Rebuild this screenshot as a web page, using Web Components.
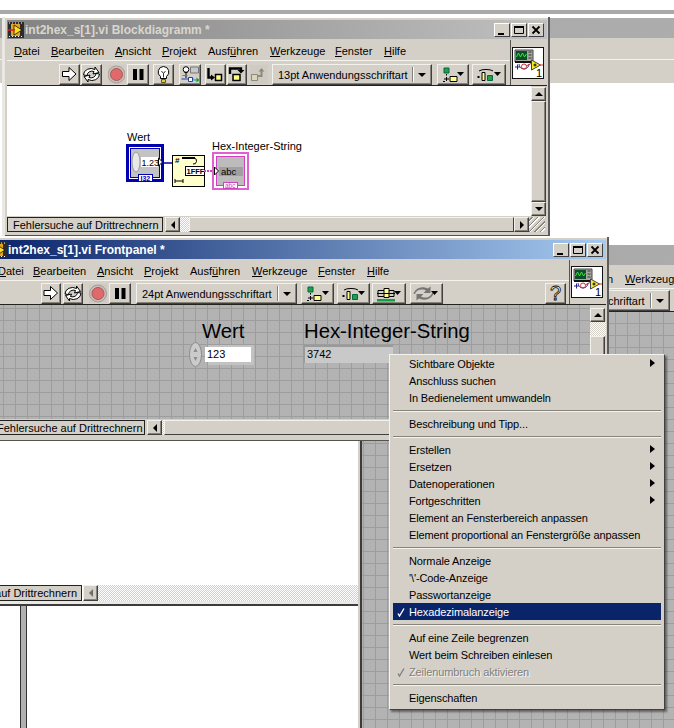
<!DOCTYPE html>
<html lang="de"><head><meta charset="utf-8"><title>int2hex</title>
<style>
html,body{margin:0;padding:0;background:#fff}
body{font:11px "Liberation Sans",sans-serif;color:#000}
</style></head><body>
<lv-desktop>
  <lv-window class="w" caption="" chrome="none" style="left:-40px;top:10px;width:760px;height:236px;--band:4px;--hh:4px;--tt:20px;--tm:0px">
    <lv-menubar slot="menu"></lv-menubar>
    <lv-toolbar slot="toolbar"></lv-toolbar>
    <lv-blank></lv-blank>
  </lv-window>

  <lv-window caption="int2hex_s[1].vi Blockdiagramm *" style="left:5px;top:17px;width:545px;height:219px;box-shadow:-3px 0 0 #e9e8e2;--tbh:24px;--pt:3px">
    <lv-menubar slot="menu">
      <lv-mi style="width:37px;margin-left:7px"><u>D</u>atei</lv-mi><lv-mi style="width:64px"><u>B</u>earbeiten</lv-mi><lv-mi style="width:47px"><u>A</u>nsicht</lv-mi><lv-mi style="width:46px"><u>P</u>rojekt</lv-mi><lv-mi style="width:62px">Ausf<u>ü</u>hren</lv-mi><lv-mi style="width:65px"><u>W</u>erkzeuge</lv-mi><lv-mi style="width:49px"><u>F</u>enster</lv-mi><lv-mi style="width:40px"><u>H</u>ilfe</lv-mi>
    </lv-menubar>
    <lv-toolbar slot="toolbar" style="padding-left:52px">
      <lv-tool icon="run" style="width:21px"></lv-tool>
      <lv-tool icon="loop" style="width:21px;margin-left:1px"></lv-tool>
      <lv-tool icon="rec" flat style="width:19px;margin-left:5px"></lv-tool>
      <lv-tool icon="pause" style="width:22px;margin-left:1px"></lv-tool>
      <lv-tool icon="bulb" style="width:21px;margin-left:4px"></lv-tool>
      <lv-tool icon="probe" style="width:22px;margin-left:5px"></lv-tool>
      <lv-tool icon="into" style="width:21px;margin-left:4px"></lv-tool>
      <lv-tool icon="over" style="width:20px;margin-left:1px"></lv-tool>
      <lv-tool icon="out" flat style="width:20px;margin-left:2px"></lv-tool>
      <lv-fontbox style="width:160px;margin-left:3px">13pt Anwendungsschriftart</lv-fontbox>
      <lv-tool icon="align" style="width:32px;margin-left:5px"></lv-tool>
      <lv-tool icon="dist" style="width:34px;margin-left:3px"></lv-tool>
    </lv-toolbar>
    <lv-viicon slot="icon"></lv-viicon>
    <lv-pane>
      <lv-canvas>
        <lv-diagram style="left:119px;top:53px"></lv-diagram>
      </lv-canvas>
      <lv-vscroll slot="v" style="width:16px"></lv-vscroll>
    </lv-pane>
    <lv-statusbar style="--tab:156px;--tabpad:5px;--thumbl:9px;--thumbw:325px;margin-bottom:2px" right grip>Fehlersuche auf Drittrechnern</lv-statusbar>
  </lv-window>

  <lv-window caption="" chrome="none" style="left:358px;top:244px;width:400px;height:500px;--hh:1px;--tt:20px;--tm:2px;--tbh:22px;--pt:1px">
    <lv-menubar slot="menu">
      <lv-mi style="width:37px;margin-left:9px"><u>D</u>atei</lv-mi><lv-mi style="width:64px"><u>B</u>earbeiten</lv-mi><lv-mi style="width:47px"><u>A</u>nsicht</lv-mi><lv-mi style="width:46px"><u>P</u>rojekt</lv-mi><lv-mi style="width:62px">Ausf<u>ü</u>hren</lv-mi><lv-mi style="width:65px"><u>W</u>erkzeuge</lv-mi>
    </lv-menubar>
    <lv-toolbar slot="toolbar" style="padding-left:149px">
      <lv-fontbox style="width:161px">24pt Anwendungsschriftart</lv-fontbox>
    </lv-toolbar>
    <lv-grid style="--gx:1px;--gy:11px;border-left:2px solid #3c3c3c"></lv-grid>
  </lv-window>

  <lv-lower style="left:-8px;top:441px;width:366px;height:287px"></lv-lower>

  <lv-window active caption="int2hex_s[1].vi Frontpanel *" style="left:-9px;top:237px;width:618px;height:204px;--tbh:23px;--il:-3px">
    <lv-menubar slot="menu">
      <lv-mi style="width:35px;margin-left:5px"><u>D</u>atei</lv-mi><lv-mi style="width:64px"><u>B</u>earbeiten</lv-mi><lv-mi style="width:47px"><u>A</u>nsicht</lv-mi><lv-mi style="width:46px"><u>P</u>rojekt</lv-mi><lv-mi style="width:62px">Ausf<u>ü</u>hren</lv-mi><lv-mi style="width:66px"><u>W</u>erkzeuge</lv-mi><lv-mi style="width:49px"><u>F</u>enster</lv-mi><lv-mi style="width:40px"><u>H</u>ilfe</lv-mi>
    </lv-menubar>
    <lv-toolbar slot="toolbar" style="padding-left:48px">
      <lv-tool icon="run" style="width:20px"></lv-tool>
      <lv-tool icon="loop" style="width:20px;margin-left:2px"></lv-tool>
      <lv-tool icon="rec" flat style="width:20px;margin-left:5px"></lv-tool>
      <lv-tool icon="pause" style="width:22px;margin-left:1px"></lv-tool>
      <lv-fontbox style="width:161px;margin-left:5px">24pt Anwendungsschriftart</lv-fontbox>
      <lv-tool icon="align" style="width:33px;margin-left:4px"></lv-tool>
      <lv-tool icon="dist" style="width:33px;margin-left:3px"></lv-tool>
      <lv-tool icon="resize" style="width:34px;margin-left:2px"></lv-tool>
      <lv-tool icon="reorder" style="width:33px;margin-left:4px"></lv-tool>
      <lv-tool icon="help" style="width:21px;margin-left:102px"></lv-tool>
    </lv-toolbar>
    <lv-viicon slot="icon"></lv-viicon>
    <lv-pane>
      <lv-grid style="--gx:10px;--gy:3px">
        <lv-numeric style="left:196px;top:16px"></lv-numeric>
        <lv-strind style="left:310px;top:14px"></lv-strind>
      </lv-grid>
      <lv-vscroll slot="v" style="width:16px;--cap:3px;--chk:14px"></lv-vscroll>
    </lv-pane>
    <lv-statusbar style="--tab:152px;--tabpad:3px;--thumbl:2px;--thumbw:420px;margin-bottom:4px">Fehlersuche auf Drittrechnern</lv-statusbar>
  </lv-window>

  <lv-contextmenu style="left:389px;top:354px">
    <lv-cmi arrow>Sichtbare Objekte</lv-cmi>
    <lv-cmi>Anschluss suchen</lv-cmi>
    <lv-cmi>In Bedienelement umwandeln</lv-cmi>
    <lv-cmsep></lv-cmsep>
    <lv-cmi>Beschreibung und Tipp...</lv-cmi>
    <lv-cmsep></lv-cmsep>
    <lv-cmi arrow>Erstellen</lv-cmi>
    <lv-cmi arrow>Ersetzen</lv-cmi>
    <lv-cmi arrow>Datenoperationen</lv-cmi>
    <lv-cmi arrow>Fortgeschritten</lv-cmi>
    <lv-cmi>Element an Fensterbereich anpassen</lv-cmi>
    <lv-cmi>Element proportional an Fenstergröße anpassen</lv-cmi>
    <lv-cmsep></lv-cmsep>
    <lv-cmi>Normale Anzeige</lv-cmi>
    <lv-cmi>'\'-Code-Anzeige</lv-cmi>
    <lv-cmi>Passwortanzeige</lv-cmi>
    <lv-cmi checked selected>Hexadezimalanzeige</lv-cmi>
    <lv-cmsep></lv-cmsep>
    <lv-cmi>Auf eine Zeile begrenzen</lv-cmi>
    <lv-cmi>Wert beim Schreiben einlesen</lv-cmi>
    <lv-cmi checked disabled>Zeilenumbruch aktivieren</lv-cmi>
    <lv-cmsep></lv-cmsep>
    <lv-cmi>Eigenschaften</lv-cmi>
  </lv-contextmenu>
</lv-desktop>

<script>
const FONT='"Liberation Sans",sans-serif';
const CHK='repeating-conic-gradient(#fff 0 25%,#d4d0c8 0 50%) 0 0/2px 2px';
function def(name,css,html){
  customElements.define(name,class extends HTMLElement{
    connectedCallback(){
      if(this.shadowRoot)return;
      this.attachShadow({mode:'open'}).innerHTML='<style>'+css+'</style>'+(typeof html==='function'?html(this):html);
    }
  });
}
const ICONS={
 run:'<path d="M3.500 7.500h6.500V3.500l7 6.500-7 6.500v-4H3.500z" fill="#fff" stroke="#000"/>',
 loop:'<path d="M2.500 11a7.500 6.500 0 0 1 11.500-5.500V3l4 5.500-6 1.500 1-2.500a5 4.500 0 0 0-7 4z" fill="#fff" stroke="#000"/><path d="M18.500 10a7.500 6.500 0 0 1-11.500 5.500V18l-4-5.500 6-1.500-1 2.500a5 4.500 0 0 0 7-4z" fill="#fff" stroke="#000"/>',
 rec:'<circle cx="10.500" cy="10.500" r="8.500" fill="#c9bdb5" stroke="#a39d98"/><circle cx="10.500" cy="10.500" r="6" fill="#e2696b" stroke="#a05a5a"/>',
 pause:'<path d="M5.500 5h4v11h-4zM12 5h4v11h-4z" fill="#000"/>',
 bulb:'<path d="M10.500 2.500a5.500 5.500 0 0 0-3 10v2h6v-2a5.500 5.500 0 0 0-3-10z" fill="#fff" stroke="#000"/><path d="M8.500 15.500h4v3h-4z" fill="#e3c94a" stroke="#6b5a10"/><path d="M8.500 7l2 2.500 2-2.500M10.500 9.500v4" fill="none" stroke="#000" stroke-width=".8"/>',
 probe:'<circle cx="6.500" cy="5.500" r="2.800" fill="#fff" stroke="#000"/><path d="M5 8.500h3M6.500 9v5" stroke="#000"/><path d="M11 3h8v6h-8z" fill="#c8c8c8" stroke="#777"/><path d="M2 15h12" stroke="#2040b0"/><path d="M9 13.500h4v4H9z" fill="#fff" stroke="#2040b0"/><path d="M14 15.500h3v-2l3 2.500-3 2.500v-2h-3z" fill="#10a040"/><path d="M3 11.500h5" stroke="#777"/>',
 into:'<path d="M3.500 4v9.500h3" fill="none" stroke="#000" stroke-width="2.400"/><path d="M6 10.500l4 3-4 3z" fill="#000"/><path d="M10.500 10.500h6v6h-6z" fill="#ffff80" stroke="#000" stroke-width="1.500"/>',
 over:'<path d="M3.500 10V4.500h11v2" fill="none" stroke="#000" stroke-width="2.400"/><path d="M11 6h7l-3.500 3.500z" fill="#000"/><path d="M6.500 10.500h7v6h-7z" fill="#ffff80" stroke="#000" stroke-width="1.500"/>',
 out:'<path d="M3 10.500h6v6H3z" fill="#d8d8b8" stroke="#8a8a80"/><path d="M9.500 12h3.500V7" fill="none" stroke="#8a8a80" stroke-width="2"/><path d="M10 7.500l3-3.500 3 3.500z" fill="#8a8a80"/>',
 help:'<text x="10.500" y="17" text-anchor="middle" font-family="Liberation Sans" font-size="20" fill="#ffffd0" stroke="#000" stroke-width=".8">?</text>',
};
const PULL=(g,w)=>'<svg width="'+w+'" height="19" viewBox="0 0 '+w+' 19">'+g+'<path d="M'+(w-11)+' 7h7l-3.500 4z" fill="#000"/></svg>';
const PULLS={
 align:'<path d="M6 3h5v5H6z" fill="#20a040" stroke="#064"/><path d="M8.500 9v1.500M8.500 12v4M6 14h5" stroke="#000"/><path d="M12 11.500h7v5h-7z" fill="#ffff90" stroke="#000"/><path d="M5 16.500h2" stroke="#000"/>',
 dist:'<path d="M6 6a8 3 0 0 1 14 0" fill="none" stroke="#000"/><path d="M4.500 11h2v2h-2z" fill="#000"/><path d="M9 7.500h3v8H9z" fill="#ffff90" stroke="#000"/><path d="M14.500 10.500h5v5h-5z" fill="#20a040" stroke="#064"/>',
 resize:'<path d="M5 6.500h7v6H5zM14 6.500h7v6h-7" fill="none" stroke="#000"/><path d="M11 4.500h5v9h-5z" fill="#ffff90" stroke="#000"/><path d="M4 15h18v2.500H4z" fill="#10a040"/><path d="M4 9.500h18" stroke="#000"/>',
 reorder:'<path d="M4 10a7 5.500 0 0 1 11-3.500L12.500 9h7V2.500l-2.500 2A9.500 8 0 0 0 2.500 10z" fill="#757575"/><path d="M21 9a7 5.500 0 0 1-11 3.500l2.500-2.500h-7v6.500l2.500-2a9.500 8 0 0 0 14.500-5.500z" fill="#757575"/>',
};
def('lv-desktop',':host{display:block;position:relative;width:674px;height:728px;overflow:hidden;background:#fff}::slotted(*){position:absolute}','<slot></slot>');

def('lv-window',`
:host{display:flex;flex-direction:column;box-sizing:border-box;position:absolute;background:#d4d0c8;
 border-top:var(--band,0) solid #a9a9a9;padding:3px 1px 1px 2px;border-right:2px solid #5c5c5c;border-bottom:1px solid #55554f;
 font:11px ${FONT};color:#000}
.hair{flex:none;height:var(--hh,1px);background:#fff;margin:-3px -1px 2px -2px}
:host([chrome=none]) .hair{margin-bottom:0}
.tb{flex:none;height:19px;display:flex;align-items:center;background:linear-gradient(90deg,#828282,#c0c0c0);color:#d9d6ce;font-weight:700;font-size:12px;padding-left:1px;white-space:nowrap;overflow:hidden}
:host([active]) .tb{background:linear-gradient(90deg,#0a246a,#a6caf0);color:#fff}
.tb svg.vi{margin-left:var(--il,0);flex:none}
.tb .t{flex:1;margin-left:1px}
.sp{flex:none;height:1px}
.btns{display:flex;padding-right:3px}
.btn{width:16px;height:14px;box-sizing:border-box;background:#d4d0c8;border:1px solid;border-color:#fff #404040 #404040 #fff;display:block}
.btn+.btn{margin-left:1px}
.top{flex:none;display:grid;grid-template-columns:1fr auto;border-bottom:1px solid #24241f}
.left{min-width:0;display:flex;flex-direction:column}
.ic{border-left:1px solid #55554f;display:flex;align-items:center;padding:0 3px 0 1px}
.body{flex:1;min-height:0;display:flex;flex-direction:column}
:host([chrome=none]) .tb{height:var(--tt,18px);margin-bottom:var(--tm,2px);background:linear-gradient(90deg,#a6a6a6,#adadad)}
`,el=>{
 const none=el.getAttribute('chrome')==='none';
 const tb=none?'<div class="tb"></div>':
 `<div class="tb"><svg class="vi" width="16" height="16" viewBox="0 0 16 16"><rect width="16" height="16" fill="#2c2c2c"/><path d="M1 1h1M4 1h1M7 1h1M10 1h1M13 1h1M1 14.500h1M4 14.500h1M7 14.500h1M10 14.500h1M13 14.500h1" stroke="#fff"/><path d="M3 2h9v12H3z" fill="#e8a020"/><path d="M6 3v10l8-5z" fill="#f7e020" stroke="#000" stroke-width=".7"/><path d="M0 8h7" stroke="#d02020" stroke-width="1.500"/></svg><span class="t">${el.getAttribute('caption')}</span><span class="btns">
 <span class="btn"><svg width="14" height="12"><path d="M3 9h6v2H3z" fill="#000"/></svg></span>
 <span class="btn"><svg width="14" height="12"><path d="M2.500 2.500h9v7h-9z" fill="none" stroke="#000"/><path d="M2 2h10v2H2z"/></svg></span>
 <span class="btn"><svg width="14" height="12"><path d="M3.500 2.500l7 7M10.500 2.500l-7 7" stroke="#000" stroke-width="1.800"/></svg></span></span></div>`;
 return `<div class="hair"></div>${tb}<div class="sp"></div><div class="top"><div class="left"><slot name="menu"></slot><slot name="toolbar"></slot></div><div class="ic"><slot name="icon"></slot></div></div><div class="body"><slot></slot></div>`;
});
def('lv-menubar',':host{display:flex;align-items:center;height:20px;border-bottom:1px solid #f4f3ee;white-space:nowrap;overflow:hidden}','<slot></slot>');
def('lv-mi',':host{display:block;flex:none;font-size:11px;padding-top:2px}','<slot></slot>');
def('lv-toolbar',':host{display:flex;align-items:flex-start;box-sizing:border-box;height:var(--tbh,23px);padding-top:var(--pt,2px);background:#d4d0c8;white-space:nowrap;overflow:hidden}','<slot></slot>');
const BEV='border:1px solid;border-color:#f2f1ec #404040 #404040 #f2f1ec;box-shadow:inset -1px -1px #86837b;background:#d4d0c8';
def('lv-tool',`:host{display:flex;flex:none;align-items:center;justify-content:center;height:21px;box-sizing:border-box;${BEV}}
:host([flat]){border-color:#d4d0c8;box-shadow:none;background:#cfcbc3}svg{display:block}`,
 el=>{const k=el.getAttribute('icon');const w=parseInt(el.style.width)-2;
  if(PULLS[k])return PULL(PULLS[k],w);
  return `<svg width="${w}" height="19" viewBox="${(21-w)/2} 1 ${w} 19">${ICONS[k]}</svg>`;});
def('lv-fontbox',`:host{display:flex;flex:none;align-items:center;height:21px;box-sizing:border-box;${BEV};padding-left:5px;font-size:11px;overflow:hidden}
.l{flex:1;white-space:nowrap}.d{width:1px;height:15px;background:#808080;border-right:1px solid #fff;margin-right:4px}.a{width:0;height:0;border:4px solid transparent;border-top:4px solid #000;border-bottom:0;margin-right:5px}`,
 '<span class="l"><slot></slot></span><span class="d"></span><span class="a"></span>');
def('lv-viicon',':host{display:block;width:32px;height:32px;background:#fff;box-shadow:inset 0 0 0 1px #111}svg{display:block}',
`<svg width="32" height="32" viewBox="0 0 32 32"><path d="M3 3h18v12H3z" fill="#a8a8a0" stroke="#444"/><path d="M4 4h11v9H4z" fill="#0b4f2a"/><path d="M4.500 10l2-4 2 4 2-4 2 4 2-3" fill="none" stroke="#40e040"/><path d="M16.500 5h3M16.500 8h3M16.500 11h3" stroke="#333"/><path d="M3 15h18" stroke="#111" stroke-width="2"/><path d="M7 17a5 5 0 0 0 10 0" fill="none" stroke="#30309a"/><path d="M3 20h5M5.500 17.500v5" stroke="#20208a"/><circle cx="12" cy="19.500" r="2.500" fill="none" stroke="#d03030"/><path d="M14 19l6-3" stroke="#d03030"/><path d="M19.500 13v10l9-5z" fill="#f5ea30" stroke="#444"/><path d="M21.500 18h3M23 16.500v3" stroke="#000"/><path d="M27 18h4" stroke="#d03030"/><text x="24" y="30" font-family="Liberation Sans,sans-serif" font-size="11">1</text></svg>`);
def('lv-pane',':host{flex:1;min-height:0;display:flex}::slotted(lv-canvas),::slotted(lv-grid){flex:1;min-width:0}','<slot></slot><slot name="v"></slot>');
def('lv-canvas',':host{display:block;position:relative;background:#fff;flex:1}','<slot></slot>');
def('lv-blank',':host{display:block;flex:1;background:#fff;margin:-1px -3px -1px -2px}','');
def('lv-grid',`:host{display:block;position:relative;flex:1;background-color:#b3b3b3;background-image:linear-gradient(90deg,#9d9d9d 1px,transparent 1px),linear-gradient(#9d9d9d 1px,transparent 1px);background-size:12px 12px;background-position:var(--gx,0) var(--gy,0)}::slotted(*){position:absolute}`,'<slot></slot>');
def('lv-vscroll',`:host{display:flex;flex-direction:column;flex:none;background:#d4d0c8;padding-top:var(--cap,1px);box-sizing:border-box}
.a,.t{box-sizing:border-box;${BEV};width:15px;display:flex;align-items:center;justify-content:center}
.a{height:14px;flex:none}.t{flex:1}.c{height:var(--chk,0);flex:none;background:${CHK}}
i{display:block;width:0;height:0;border:4px solid transparent;border-bottom:4px solid #000;border-top:0}.dn i{border-top:4px solid #000;border-bottom:0}`,
'<div class="a"><i></i></div><div class="c"></div><div class="t"></div><div class="a dn"><i></i></div>');
def('lv-statusbar',`:host{display:flex;flex:none;height:15px;align-items:stretch;background:#d4d0c8;margin-top:1px;font-size:11px}
.tab{flex:none;width:var(--tab);box-sizing:border-box;border:1px solid #222;background:#d4d0c8;padding-left:var(--tabpad);display:flex;align-items:center;white-space:nowrap;overflow:hidden}
.b{flex:none;width:15px;box-sizing:border-box;${BEV};margin-left:2px;display:flex;align-items:center;justify-content:center}
.b i{display:block;width:0;height:0;border:4px solid transparent;border-right:4px solid #000;border-left:0}
.r i{border-left:4px solid #000;border-right:0}
.gap{flex:none;width:var(--thumbl);background:${CHK}}
.t{flex:none;width:var(--thumbw);box-sizing:border-box;border:1px solid;border-color:#f2f1ec #404040 #404040 #f2f1ec;background:#d4d0c8}
.g{flex:none;width:16px;background:repeating-linear-gradient(135deg,#d4d0c8 0 2px,#86837b 2px 3px,#fff 3px 4px)}`,
el=>`<div class="tab"><slot></slot></div><div class="b"><i></i></div><div class="gap"></div><div class="t"></div>${el.hasAttribute('right')?'<div class="b r" style="margin-left:0"><i></i></div>':''}${el.hasAttribute('grip')?'<div class="g"></div>':''}`);
def('lv-diagram',':host{display:block;position:absolute;width:140px;height:60px}svg{display:block;overflow:visible}text{font-family:"Liberation Sans",sans-serif}.l{position:absolute;font-size:11px;white-space:nowrap;color:#000}',
`<span class="l" style="left:1px;top:-8px">Wert</span><span class="l" style="left:86px;top:1px">Hex-Integer-String</span>
<svg width="140" height="60" viewBox="0 0 140 60">
<rect x="1.500" y="6.500" width="35" height="35" fill="#fff" stroke="#0000b0" stroke-width="3"/><rect x="4.500" y="9.500" width="29" height="29" fill="#c3c3c3" stroke="#0000b0"/>
<ellipse cx="10" cy="23" rx="4" ry="10" fill="#e8e8e8" stroke="#9a9a9a"/>
<rect x="15" y="18" width="17" height="10" fill="#fff"/><text x="15.500" y="27" font-size="9">1.23</text>
<path d="M32.500 19v8l4-4z" fill="#fff" stroke="#000"/>
<rect x="12.500" y="35.500" width="14" height="7" fill="#fff" stroke="#0000b0"/><text x="14.500" y="41.500" font-size="7" font-weight="700" fill="#0000b0">I32</text>
<path d="M37 24h9" stroke="#0000b0" stroke-width="1.500"/>
<rect x="46.500" y="16.500" width="32" height="31" fill="#ffffcc" stroke="#000"/>
<text x="49" y="24" font-size="8" font-weight="700">#</text><path d="M56 19h13" stroke="#000" stroke-width="2"/><path d="M68 19a3 3 0 1 1-1 6" fill="none" stroke="#000"/>
<rect x="59.500" y="27.500" width="19" height="9" fill="#fff" stroke="#000"/><text x="60.500" y="35" font-size="7.500" font-weight="700">1FFF</text>
<path d="M49 42h8M49 40v4M57 40v4" stroke="#000"/>
<path d="M78 32h9" stroke="#d040c0" stroke-width="2" stroke-dasharray="2 1"/>
<rect x="87" y="14" width="35" height="36" fill="#fff" stroke="#e060d0" stroke-width="2"/><rect x="90.500" y="17.500" width="28" height="29" fill="#bcbcbc" stroke="#d040c0"/>
<rect x="93" y="28" width="24" height="9" fill="#a0a0a0"/><text x="95" y="36" font-size="9.500">abc</text>
<path d="M88.500 28v8l4-4z" fill="#fff" stroke="#000"/>
<rect x="97.500" y="43.500" width="14" height="6" fill="#fff" stroke="#d040c0"/><text x="99" y="49" font-size="6.500" fill="#d040c0">abc</text>
</svg>`);
def('lv-numeric',`:host{display:block;width:60px;height:60px}.l{position:absolute;left:13px;top:-2px;font-size:20.300px;line-height:24px;white-space:nowrap}
.sp{position:absolute;left:0;top:21px}
.b{position:absolute;left:16px;top:26px;width:46px;height:15px;background:#fff;font-size:11px;line-height:15px;padding-left:2px;box-sizing:border-box;box-shadow:3px 3px 0 #c2c2c2,3px -2px 0 #c2c2c2}`,
`<span class="l">Wert</span><svg class="sp" width="13" height="25"><ellipse cx="6.500" cy="12.500" rx="6" ry="12" fill="#cbcbcb" stroke="#8c8c8c"/><path d="M6.500 6l2 4h-4zM6.500 19l2-4h-4z" fill="#8c8c8c"/></svg><span class="b">123</span>`);
def('lv-strind',`:host{display:block;width:90px;height:60px}.l{position:absolute;left:1px;top:0;font-size:20.300px;line-height:24px;white-space:nowrap}
.b{position:absolute;left:0;top:26px;width:90px;height:18px;background:#c9c9c9;font-size:11px;line-height:18px;padding-left:4px;box-sizing:border-box;box-shadow:inset 2px 2px #9a9a9a}`,
`<span class="l">Hex-Integer-String</span><span class="b">3742</span>`);
def('lv-lower',`:host{display:flex;flex-direction:column;position:absolute;background:#fff;font:11px ${FONT}}
.w{flex:none;height:144px}
.s{flex:none;height:16px;display:flex}
.tab{flex:none;width:90px;box-sizing:border-box;background:#d4d0c8;border:1px solid #222;display:flex;align-items:center;justify-content:flex-end;padding-right:4px;white-space:nowrap;overflow:hidden}
.b{flex:none;width:15px;box-sizing:border-box;${BEV};margin-left:1px;display:flex;align-items:center;justify-content:center}
.b i{display:block;width:0;height:0;border:4px solid transparent;border-right:4px solid #6e6e6e;border-left:0}
.c{flex:1;background:${CHK}}
.e{flex:none;height:3px;background:#e9e8e2}
.d{flex:none;height:2px;background:#3c3c3c}
.p{flex:1;display:flex;padding-left:28px}
.v{width:5px;background:#b0b0b0;border:solid #333;border-width:0 1px}`,
`<div class="w"></div><div class="s"><div class="tab">Fehlersuche auf Drittrechnern</div><div class="b"><i></i></div><div class="c"></div></div><div class="e"></div><div class="d"></div><div class="p"><div class="v"></div></div>`);
def('lv-contextmenu',`:host{display:block;position:absolute;width:276px;box-sizing:border-box;background:#d4d0c8;padding:0 3px 3px;border:1px solid;border-color:#f4f3ee #404040 #404040 #f4f3ee;box-shadow:2px 2px 2px rgba(0,0,0,.45);font:11px ${FONT};letter-spacing:-.12px}`,'<slot></slot>');
def('lv-cmi',`:host{display:flex;align-items:center;height:17px;position:relative;padding-left:16px;white-space:nowrap;color:#000}
:host([selected]){background:#0a246a;color:#fff}
:host([disabled]){color:#808080;text-shadow:1px 1px 0 #f4f3ee}
.ar{position:absolute;right:6px;top:4px;width:0;height:0;border:4px solid transparent;border-left:5px solid #000;border-right:0}
.ck{position:absolute;left:4px;top:5px}`,
el=>`<slot></slot>${el.hasAttribute('arrow')?'<span class="ar"></span>':''}${el.hasAttribute('checked')?`<svg class="ck" width="8" height="9" viewBox="0 0 8 9"><path d="M1 5.500l1.500 2.500L7 .5" fill="none" stroke="${el.hasAttribute('disabled')?'#808080':'#fff'}" stroke-width="1.400"/></svg>`:''}`);
def('lv-cmsep',':host{display:block;height:9px;position:relative}:host::after{content:"";position:absolute;left:0;right:0;top:4px;height:1px;background:#86837b;border-bottom:1px solid #f4f3ee}','');
</script>
</body></html>
